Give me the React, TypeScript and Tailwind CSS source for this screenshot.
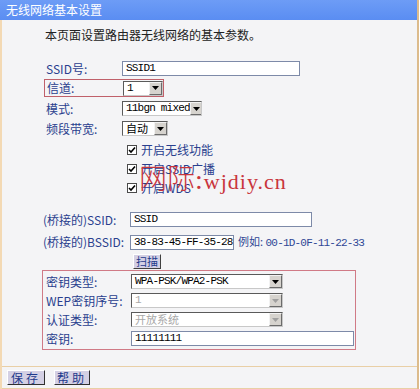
import React from 'react';

const cn = '[font-family:"Noto_Sans_CJK_SC",sans-serif]';
const mono = '[font-family:"Liberation_Mono","Noto_Sans_CJK_SC",monospace]';

const Arrow = ({ disabled }: { disabled?: boolean }) => (
  <span className="ml-auto flex h-[13px] w-[13px] shrink-0 items-center justify-center border border-t-[#f2f2f2] border-l-[#f2f2f2] border-b-[#6b6b6b] border-r-[#6b6b6b] bg-[#d6d3ce]">
    <svg width="7" height="4" viewBox="0 0 7 4">
      <polygon points="0,0 7,0 3.5,4" fill={disabled ? '#a0a0a0' : '#000'} />
    </svg>
  </span>
);

interface SelectProps {
  value: string;
  className: string;
  disabled?: boolean;
  latin?: boolean;
}

const Select: React.FC<SelectProps> = ({ value, className, disabled, latin }) => (
  <div
    className={`flex h-[15px] items-center overflow-hidden border border-t-[#5a5a5a] border-l-[#5a5a5a] border-b-[#c8c8c8] border-r-[#c8c8c8] bg-white pl-[3px] ${className}`}
  >
    <span
      className={`whitespace-nowrap text-[11px] leading-[13px] ${latin ? `${mono} tracking-[-0.8px]` : cn} ${
        disabled ? 'text-[#a8a8a8]' : 'text-black'
      }`}
    >
      {value}
    </span>
    <Arrow disabled={disabled} />
  </div>
);

const Input = ({ value, className }: { value: string; className: string }) => (
  <div
    className={`flex h-[15px] items-center overflow-hidden whitespace-nowrap border border-[#7d8aa8] bg-white pl-[3px] ${mono} text-[11px] leading-[13px] tracking-[-0.8px] text-black ${className}`}
  >
    {value}
  </div>
);

const Label = ({ children, className }: { children: React.ReactNode; className: string }) => (
  <div className={`${cn} shrink-0 whitespace-nowrap text-[12px] leading-[14px] text-[#2a3f8e] ${className}`}>{children}</div>
);

const Check = ({ label }: { label: string }) => (
  <div className="flex h-[19px] items-center pl-[125px]">
    <span className="flex h-[10px] w-[10px] items-center justify-center border border-[#4a4a4a] bg-white">
      <svg width="8" height="8" viewBox="0 0 8 8">
        <path d="M1 4 L3 6 L7 1.5" stroke="#000" strokeWidth="1.6" fill="none" />
      </svg>
    </span>
    <span className={`${cn} ml-[4px] whitespace-nowrap text-[12px] leading-[14px] text-[#2a3f8e]`}>{label}</span>
  </div>
);

export default function App() {
  return (
    <div className="relative h-[389px] w-[420px] overflow-hidden bg-white">
      <div className="flex h-[389px] w-[419px] flex-col border-r-[2px] border-[#dcbb8c]">
        <div className={`flex h-[20px] items-center bg-gradient-to-b from-[#6d9cf6] to-[#5a8df2] pl-[6px] ${cn} text-[12px] text-white`}>
          无线网络基本设置
        </div>

        <div className="flex flex-1 flex-col border-l-[2px] border-[#f3d9b4] bg-[#f4f4f6]">
          <div className={`${cn} mt-[8px] pl-[43px] text-[12px] leading-[14px] text-[#222]`}>
            本页面设置路由器无线网络的基本参数。
          </div>

          <div className="mt-[19px] flex items-center pl-[44px]">
            <Label className="w-[76px]">SSID号:</Label>
            <Input value="SSID1" className="w-[178px]" />
          </div>

          <div className="ml-[42px] mt-[3px] flex h-[18px] w-[120px] items-center border border-[#c0606a] pl-[2px]">
            <Label className="w-[76px]">信道:</Label>
            <Select value="1" latin className="w-[40px]" />
          </div>

          <div className="mt-[4px] flex items-center pl-[44px]">
            <Label className="w-[76px]">模式:</Label>
            <Select value="11bgn mixed" latin className="w-[80px]" />
          </div>

          <div className="mt-[5px] flex items-center pl-[44px]">
            <Label className="w-[76px]">频段带宽:</Label>
            <Select value="自动" className="w-[46px]" />
          </div>

          <div className="mt-[4px] flex flex-col">
            <Check label="开启无线功能" />
            <Check label="开启SSID广播" />
            <Check label="开启WDS" />
          </div>

          <div className="mt-[15px] flex items-center pl-[41px]">
            <Label className="w-[87px]">(桥接的)SSID:</Label>
            <Input value="SSID" className="w-[182px]" />
          </div>

          <div className="mt-[7px] flex items-center pl-[41px]">
            <Label className="w-[87px]">(桥接的)BSSID:</Label>
            <Input value="38-83-45-FF-35-28" className="w-[104px]" />
            <span className={`${cn} ml-[4px] whitespace-nowrap text-[11px] leading-[14px] text-[#2f4795]`}>
              例如: <span className={`${mono} tracking-[-0.8px]`}>00-1D-0F-11-22-33</span>
            </span>
          </div>

          <div className="mt-[4px] pl-[131px]">
            <div className={`flex h-[15px] w-[28px] items-center justify-center border border-t-[#ffffff] border-l-[#ffffff] border-b-[#404040] border-r-[#404040] bg-[#d4d0e4] ${cn} text-[11px] text-[#1f3a8c]`}>
              扫描
            </div>
          </div>

          <div className="ml-[40px] mt-[1px] flex h-[80px] w-[314px] flex-col justify-center gap-[4px] border border-[#d07a86] pl-[3px]">
            <div className="flex items-center">
              <Label className="w-[85px]">密钥类型:</Label>
              <Select value="WPA-PSK/WPA2-PSK" latin className="w-[152px]" />
            </div>
            <div className="flex items-center">
              <Label className="w-[85px] text-[11px]">WEP密钥序号:</Label>
              <Select value="1" latin disabled className="w-[152px]" />
            </div>
            <div className="flex items-center">
              <Label className="w-[85px]">认证类型:</Label>
              <Select value="开放系统" disabled className="w-[152px]" />
            </div>
            <div className="flex items-center">
              <Label className="w-[85px]">密钥:</Label>
              <Input value="11111111" className="w-[223px]" />
            </div>
          </div>

          <div className="flex-1" />

          <div className="flex h-[23px] items-center gap-[9px] border-t border-b border-[#e9cfa6] pl-[5px]">
            <div className={`flex h-[15px] w-[38px] items-center justify-center border border-t-[#ffffff] border-l-[#ffffff] border-b-[#303030] border-r-[#303030] bg-[#d4d0e4] ${cn} text-[12px] tracking-[3px] text-[#1f3a8c]`}>
              保存
            </div>
            <div className={`flex h-[15px] w-[36px] items-center justify-center border border-t-[#ffffff] border-l-[#ffffff] border-b-[#303030] border-r-[#303030] bg-[#d4d0e4] ${cn} text-[12px] tracking-[3px] text-[#1f3a8c]`}>
              帮助
            </div>
          </div>
        </div>
      </div>

      <div
        className={`absolute left-[139px] top-[164px] flex items-baseline text-[#c9353c] [font-family:"Liberation_Serif","Noto_Sans_CJK_SC",serif]`}
      >
        <span className="text-[28px] font-light leading-[32px]">网际:</span>
        <span className="ml-[1px] text-[22px] leading-[32px] tracking-[1px]">wjdiy.cn</span>
      </div>
    </div>
  );
}
